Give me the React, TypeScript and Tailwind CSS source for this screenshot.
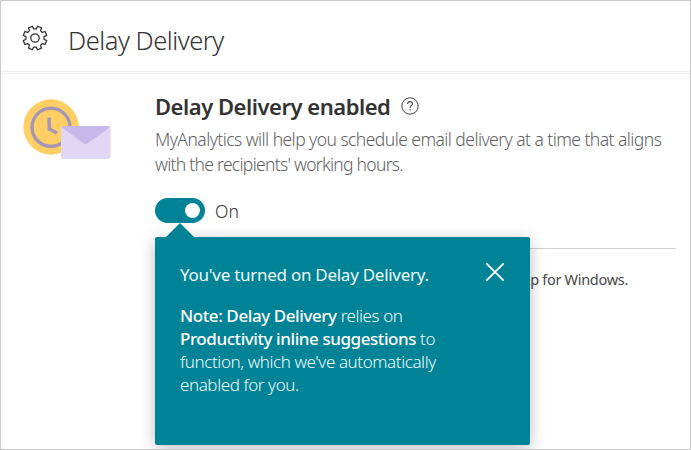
import type { ReactNode } from "react";

function gearPath(teeth: number, outer: number, inner: number) {
  const step = (Math.PI * 2) / teeth;
  const offsets: [number, number][] = [
    [-0.32, inner],
    [-0.23, outer],
    [0.23, outer],
    [0.32, inner],
  ];
  const points: string[] = [];
  for (let i = 0; i < teeth; i++) {
    for (const [offset, radius] of offsets) {
      const angle = (i + 0.5 + offset) * step;
      points.push(`${(Math.sin(angle) * radius).toFixed(2)} ${(-Math.cos(angle) * radius).toFixed(2)}`);
    }
  }
  return `M${points.join("L")}Z`;
}

function GearIcon() {
  return (
    <svg className="mt-[4px] h-[26px] w-[26px]" viewBox="-13 -13 26 26" fill="none" stroke="#333" strokeWidth="1.3" strokeLinejoin="round">
      <path d={gearPath(8, 12, 9.2)} />
      <circle r="4.2" />
    </svg>
  );
}

function ClockMail() {
  return (
    <svg className="block h-[62px] w-[88px]" viewBox="0 0 88 62">
      <circle cx="28" cy="28" r="27.7" fill="#ffcf66" />
      <circle cx="28" cy="28.3" r="19" fill="none" stroke="#a596b6" strokeWidth="3.4" />
      <path d="M26 18.5L26.4 30.2L34 34" fill="none" stroke="#a596b6" strokeWidth="3.6" />
      <rect x="38" y="27" width="49.6" height="33" rx="3" fill="#e1d7f5" />
      <path d="M38.6 28.2Q39.4 27 41 27H84.6Q86.2 27 87 28.2L65 44Q62.5 46.2 60 44Z" fill="#c6b8eb" />
    </svg>
  );
}

function HelpIcon() {
  return (
    <svg className="block h-[18px] w-[18px]" viewBox="0 0 18 18" fill="none" stroke="#444">
      <circle cx="9" cy="9" r="8.2" strokeWidth="1" />
      <path d="M6.6 7C6.6 5.4 7.6 4.6 9 4.6S11.4 5.4 11.4 6.8C11.4 8.7 9 8.7 9 10.9" strokeWidth="1.1" />
      <path d="M9 12.3V13.6" strokeWidth="1.2" />
    </svg>
  );
}

function Line({ className, children }: { className: string; children: ReactNode }) {
  return (
    <div className="flex">
      <span className={`whitespace-pre ${className}`}>{children}</span>
    </div>
  );
}

function Callout() {
  return (
    <aside className="absolute left-[154px] top-[236px] h-[208px] w-[375px] rounded-[2px] bg-[#008397] pl-[25px] pt-[26px] text-[17px] leading-[23px] text-[#edf9fa] shadow-[0_3px_16px_rgba(0,0,0,0.26)]">
      <svg className="absolute left-[11px] top-[-14px] h-[15px] w-[28px]" viewBox="0 0 28 15">
        <path d="M14 0L28 14V15H0V14Z" fill="#008397" />
      </svg>
      <button className="absolute left-[330px] top-[25px] block" aria-label="Close">
        <svg className="block h-5 w-5" viewBox="0 0 20 20" stroke="#fff" strokeWidth="1.8">
          <path d="M1.3 1.3L18.7 18.7M18.7 1.3L1.3 18.7" />
        </svg>
      </button>
      <Line className="tracking-[-0.27px]">You've turned on Delay Delivery.</Line>
      <div className="pt-[18px] font-light">
        <Line className="tracking-[-0.42px]">
          <span className="font-medium text-white">Note: Delay Delivery</span> relies on
        </Line>
        <Line className="tracking-[-0.43px]">
          <span className="font-medium text-white">Productivity inline suggestions</span> to
        </Line>
        <Line className="tracking-[-0.41px]">function, which we've automatically</Line>
        <Line className="tracking-[-0.42px]">enabled for you.</Line>
      </div>
    </aside>
  );
}

export default function App() {
  return (
    <main className="relative h-[450px] w-[691px] overflow-hidden border border-[#c8c8c8] bg-white font-['Noto_Sans',sans-serif] text-[#333]">
      <header className="flex h-[73px] items-start border-b border-[#ececec]">
        <div className="flex h-[71px] w-full items-center border-b border-[#ececec] pl-[21px]">
          <GearIcon />
          <h1 className="pl-[20px] pt-[7px] text-[25.5px] font-[350] leading-[32px] tracking-[-0.48px]">Delay Delivery</h1>
        </div>
      </header>
      <section className="flex pl-[22px] pt-[25px]">
        <ClockMail />
        <div className="ml-[44px] mt-[-6px] w-[521px]">
          <div className="flex h-[28px] items-center">
            <h2 className="mb-[2px] w-[236px] whitespace-pre text-[22px] font-semibold leading-[28px] tracking-[-0.48px]">Delay Delivery enabled</h2>
            <span className="mb-[3px] ml-[10px]"><HelpIcon /></span>
          </div>
          <div className="mt-[6px] text-[17.5px] font-light leading-[25px] text-[#606060]">
            <Line className="tracking-[-0.55px]">MyAnalytics will help you schedule email delivery at a time that aligns</Line>
            <Line className="tracking-[-0.71px]">with the recipients' working hours.</Line>
          </div>
          <div className="mt-[21px] flex h-[25px] items-center">
            <button className="flex h-[25px] w-[50px] items-center justify-end rounded-full bg-[#008397] pr-[5px]" aria-label="Delay Delivery">
              <span className="block h-[15px] w-[15px] rounded-full bg-white" />
            </button>
            <span className="ml-[10px] text-[17.5px] font-[350] leading-[24px]">On</span>
          </div>
          <div className="mt-[25px] border-t border-[#d0d0d0]" />
          <p className="mt-[20px] pr-[48px] text-right text-[14.5px] leading-[20px] tracking-[-0.3px] text-[#484848]">p for Windows.</p>
        </div>
      </section>
      <Callout />
    </main>
  );
}
